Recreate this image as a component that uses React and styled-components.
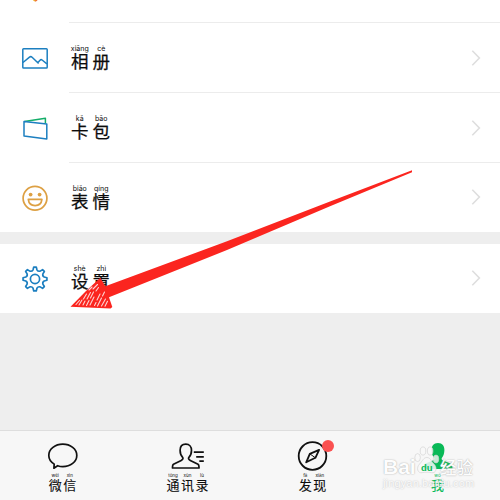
import React from 'react';
import styled, { createGlobalStyle } from 'styled-components';

const GlobalStyle = createGlobalStyle`
  body {
    margin: 0;
    background: #ededed;
    font-family: 'Noto Sans CJK SC', sans-serif;
  }
`;

const Screen = styled.div`
  position: relative;
  display: flex;
  flex-direction: column;
  width: 500px;
  height: 500px;
  overflow: hidden;
  background: #eeeeee;
`;

const Group = styled.div`
  display: flex;
  flex-direction: column;
  background: #ffffff;
  margin-bottom: ${(props) => props.$gap || 0}px;
`;

const Row = styled.div`
  display: flex;
  height: ${(props) => props.$height || 70}px;
`;

const IconCell = styled.div`
  display: flex;
  align-items: center;
  justify-content: center;
  width: 69px;
  height: 70px;
  padding-left: 1px;
  box-sizing: border-box;
  margin-top: ${(props) => props.$shift || 0}px;
`;

const RowBody = styled.div`
  display: flex;
  flex: 1;
  align-items: center;
  justify-content: space-between;
  box-sizing: border-box;
  padding: 0 18px 0 2px;
  border-bottom: 1px solid ${(props) => (props.$last ? 'transparent' : '#ececec')};
`;

const Label = styled.div`
  display: flex;
  gap: ${(props) => (props.$small ? 1.5 : 4)}px;
  color: ${(props) => props.color || '#0c0c0c'};
`;

const Syllable = styled.div`
  display: flex;
  flex-direction: column;
  align-items: center;
  width: ${(props) => (props.$small ? 13 : 17.5)}px;
`;

const Pinyin = styled.span`
  font-family: Inter, 'Noto Sans', sans-serif;
  font-size: ${(props) => (props.$small ? 4.5 : 7)}px;
  line-height: ${(props) => (props.$small ? 4 : 7)}px;
  font-weight: 400;
  white-space: nowrap;
`;

const Hanzi = styled.span`
  font-size: ${(props) => (props.$small ? 13 : 17.5)}px;
  line-height: ${(props) => (props.$small ? 14 : 18)}px;
  font-weight: 400;
  -webkit-text-stroke: ${(props) => (props.$small ? 0.1 : 0.25)}px currentColor;
`;

const TabBar = styled.div`
  display: grid;
  grid-template-columns: repeat(4, 1fr);
  height: 70px;
  box-sizing: border-box;
  margin-top: auto;
  background: #f7f7f7;
  border-top: 1px solid #dedede;
`;

const Tab = styled.div`
  display: flex;
  flex-direction: column;
  align-items: center;
  padding-top: 8px;
`;

const TabIcon = styled.div`
  position: relative;
  width: 34px;
  height: 34px;
  margin-bottom: 1px;
`;

const Badge = styled.span`
  position: absolute;
  top: 1px;
  right: -4px;
  width: 12px;
  height: 12px;
  border-radius: 50%;
  background: #fa5151;
`;

const ArrowLayer = styled.svg`
  position: absolute;
  top: 0;
  left: 0;
`;

const Watermark = styled.div`
  position: absolute;
  left: 383px;
  top: 445px;
  width: 90px;
  height: 45px;
  color: #fdfdfd;
`;

const WatermarkName = styled.div`
  display: flex;
  align-items: center;
  height: 32px;
  padding-top: 12px;
  box-sizing: border-box;
  font-family: 'Liberation Sans', sans-serif;
  font-size: 21px;
  line-height: 20px;
  font-weight: 700;
  text-shadow: 0 0 1.5px #999999;
`;

const WatermarkCjk = styled.span`
  font-family: 'Noto Sans CJK SC', sans-serif;
  font-size: 16.5px;
  font-weight: 500;
  margin-left: auto;
`;

const WatermarkUrl = styled.div`
  font-family: 'Liberation Sans', sans-serif;
  font-size: 11px;
  line-height: 12px;
  letter-spacing: 0.15px;
  white-space: nowrap;
  opacity: 0.85;
  text-shadow: 0 0 1.5px #aaaaaa;
`;

const Paw = styled.svg`
  position: absolute;
  left: 31px;
  top: 0;
`;

const PawText = styled.text`
  font-family: 'Liberation Sans', sans-serif;
  font-size: 9.5px;
  font-weight: 700;
  fill: #09b957;
  stroke: none;
`;

const BLUE = '#1c7fc0';

const Wallet = () => (
  <svg width="28" height="28" viewBox="0 0 28 28">
    <path d="M4 12 L24 12 L16.5 24.5 Q14 28.4 11.5 24.5Z" fill="#eeb02f" />
    <path d="M14.3 26.2l2.4-2" stroke="#ef6b3b" strokeWidth="1.2" />
  </svg>
);

const Album = () => (
  <svg width="28" height="28" viewBox="0 0 28 28" fill="none" stroke={BLUE} strokeWidth="1.5">
    <rect x="1.8" y="4.8" width="24.4" height="19.2" rx="0.8" />
    <path d="M2 18.5L8.5 13.2q1.3-1.1 2.6 0l6.5 6.3M17 18.5l2-2.3q1-1 2.1-.2l4.8 3.8" strokeLinejoin="round" />
  </svg>
);

const Cards = () => (
  <svg width="28" height="28" viewBox="0 0 28 28" fill="none" strokeWidth="1.5" strokeLinejoin="round">
    <path d="M3.4 7.4L24.4 4.3V9.3" stroke="#13ad68" />
    <path d="M3 7.4L25.8 10V25L3 22.1Z" stroke={BLUE} />
  </svg>
);

const Smile = () => (
  <svg width="28" height="28" viewBox="0 0 28 28" fill="none" stroke="#dda043" strokeWidth="1.7">
    <circle cx="14" cy="14.2" r="11.9" />
    <circle cx="9.6" cy="10.6" r="1.9" fill="#dda043" stroke="none" />
    <circle cx="18.6" cy="10.6" r="1.9" fill="#dda043" stroke="none" />
    <path d="M7.3 15.4H20.9Q20.2 21.6 14.1 21.6T7.3 15.4Z" strokeLinejoin="round" />
  </svg>
);

const gearPath = () => {
  const point = (r, deg) => {
    const a = (deg * Math.PI) / 180;
    return `${(14 + r * Math.sin(a)).toFixed(2)} ${(14 - r * Math.cos(a)).toFixed(2)}`;
  };
  let d = '';
  for (let i = 0; i < 8; i++) {
    const a = i * 45;
    d += `${i === 0 ? 'M' : 'L'}${point(12, a - 6)} L${point(12, a + 6)} L${point(9.4, a + 12)} Q${point(7.9, a + 22.5)} ${point(9.4, a + 33)} `;
  }
  return d + 'Z';
};

const Gear = () => (
  <svg width="28" height="28" viewBox="0 0 28 28" fill="none" stroke={BLUE} strokeWidth="1.7" strokeLinejoin="round">
    <path d={gearPath()} />
    <circle cx="14" cy="14" r="4.6" />
  </svg>
);

const Chevron = () => (
  <svg width="12" height="18" viewBox="0 0 12 18" fill="none" stroke="#dedede" strokeWidth="1.6">
    <path d="M2.3 1.8L9.4 9L2.3 16.2" />
  </svg>
);

const ChatIcon = () => (
  <svg width="34" height="34" viewBox="0 0 34 34" fill="none" stroke="#111" strokeWidth="1.7" strokeLinejoin="round">
    <path d="M8.2 25.1C4.9 22.9 2.8 20 2.8 16.4C2.8 10 9.2 5.2 16.8 5.2S30.8 10 30.8 16.4S24.5 27.6 16.8 27.6C14.8 27.6 13.3 27.3 11.6 26.7L7.9 29.2Z" />
  </svg>
);

const ContactsIcon = () => (
  <svg width="34" height="34" viewBox="0 0 34 34" fill="none" stroke="#111" strokeWidth="1.7" strokeLinejoin="round">
    <path d="M14.8 5.2C10.9 5.2 9.1 8 9.1 11.3C9.1 14.2 10.1 16.8 11.6 18.3C12.5 19.3 11.8 20.7 10.2 21.5L2.5 25.3Q1.5 26 1.5 28.1V29H28V28.1Q28 26 27 25.3L19.3 21.5C17.7 20.7 17 19.3 17.9 18.3C19.5 16.8 20.5 14.2 20.5 11.3C20.5 8 18.6 5.2 14.8 5.2Z" />
    <path d="M22.8 13.2H32.8M25.2 17.8H32.8M28.3 22.2H32.8" />
  </svg>
);

const CompassIcon = () => (
  <svg width="34" height="34" viewBox="0 0 34 34" fill="none" stroke="#111" strokeWidth="1.8" strokeLinejoin="round">
    <circle cx="16.5" cy="17" r="13.8" />
    <path d="M23.1 10.8L13.8 14.8L10.2 23.3L19.4 18.8Z" />
    <path d="M13.8 14.8L19.4 18.8" strokeWidth="1" />
  </svg>
);

const MeIcon = () => (
  <svg width="34" height="34" viewBox="0 0 34 34" fill="#09b957">
    <path d="M17 4C12.5 4 10.6 7 10.6 11C10.6 14.3 11.6 17 13 18.7C13.8 19.7 13.4 20.8 11.8 21.6L4.5 24.5Q2.5 25.3 2.5 28V30H31.5V28Q31.5 25.3 29.5 24.5L22.2 21.6C20.6 20.8 20.2 19.7 21 18.7C22.4 17 23.4 14.3 23.4 11C23.4 7 21.5 4 17 4Z" />
  </svg>
);

const rows = [
  { icon: <Album />, text: [['xiāng', '相'], ['cè', '册']] },
  { icon: <Cards />, text: [['kǎ', '卡'], ['bāo', '包']] },
  { icon: <Smile />, text: [['biǎo', '表'], ['qíng', '情']], height: 69, last: true },
];

const tabs = [
  { icon: <ChatIcon />, text: [['wēi', '微'], ['xìn', '信']] },
  { icon: <ContactsIcon />, text: [['tōng', '通'], ['xùn', '讯'], ['lù', '录']] },
  { icon: <CompassIcon />, text: [['fā', '发'], ['xiàn', '现']], badge: true },
  { icon: <MeIcon />, text: [['wǒ', '我']], color: '#09b957' },
];

const RubyLabel = ({ text, small, color }) => (
  <Label $small={small} color={color}>
    {text.map(([pinyin, hanzi]) => (
      <Syllable key={hanzi} $small={small}>
        <Pinyin $small={small}>{pinyin}</Pinyin>
        <Hanzi $small={small}>{hanzi}</Hanzi>
      </Syllable>
    ))}
  </Label>
);

const SettingRow = ({ icon, text, height, last }) => (
  <Row $height={height}>
    <IconCell>{icon}</IconCell>
    <RowBody $last={last}>
      <RubyLabel text={text} />
      <Chevron />
    </RowBody>
  </Row>
);

// red pointer with a hatched head
const Arrow = () => (
  <ArrowLayer width="500" height="320" viewBox="0 0 500 320">
    <path
      d="M412 170.3L412 172.2L330 206.3L227 250L109 297.3L112.3 307L110.5 308.4L70.5 306.7L86 291L100.3 277.8L105.3 286.3L227 241.2L330 201.4Z"
      fill="#fb251f"
    />
    <g stroke="#fff" strokeWidth="1.1" strokeLinecap="round" opacity="0.8">
      <path d="M76 304.5l3.5-4M79 305l3-5M83.5 299l3-5M83 305l2-4M87 299l3.5-6.5M86.5 305.5l2.5-5M90.5 298l3-6M90 305l4-8M94.5 305.5l1.5-3M97 300l3-6M97.5 306l4-8M93 289l4.5-4.5M101.5 306l4-7M102.5 296l2-4M105 306.3l2.5-5M96 291l2.5-3.5M89 290l3-3" />
    </g>
  </ArrowLayer>
);

const App = () => {
  return (
    <>
      <GlobalStyle />
      <Screen>
        <Group $gap={11.5}>
          <Row $height={23}>
            <IconCell $shift={-46}>
              <Wallet />
            </IconCell>
            <RowBody />
          </Row>
          {rows.map((row, i) => (
            <SettingRow key={i} {...row} />
          ))}
        </Group>
        <Group>
          <SettingRow icon={<Gear />} text={[['shè', '设'], ['zhì', '置']]} height={69.5} last />
        </Group>
        <TabBar>
          {tabs.map((tab, i) => (
            <Tab key={i}>
              <TabIcon>
                {tab.icon}
                {tab.badge && <Badge />}
              </TabIcon>
              <RubyLabel text={tab.text} color={tab.color} small />
            </Tab>
          ))}
        </TabBar>
        <Arrow />
        <Watermark>
          <WatermarkName>
            Bai
            <WatermarkCjk>经验</WatermarkCjk>
          </WatermarkName>
          <WatermarkUrl>jingyan.baidu.com</WatermarkUrl>
          <Paw width="28" height="32" viewBox="0 0 28 32" fill="#f8f8f8" stroke="#cfcfcf" strokeWidth="0.6">
            <ellipse cx="3.6" cy="12.6" rx="2.8" ry="4" />
            <ellipse cx="9" cy="6" rx="2.8" ry="4.1" />
            <ellipse cx="16.2" cy="6" rx="2.8" ry="4.1" fillOpacity="0.85" />
            <ellipse cx="22" cy="14" rx="2.8" ry="4" fillOpacity="0.8" />
            <path
              d="M12.8 12.5C9.5 12.5 8.5 16 5.8 18.8C1.5 23 4 28.5 8 27.7C12 27 14 27 17.5 27.7C22 28.5 24 23 19.8 18.8C17 16 16.5 12.5 12.8 12.5Z"
              fillOpacity="0.85"
            />
            <PawText x="7" y="25.5">du</PawText>
          </Paw>
        </Watermark>
      </Screen>
    </>
  );
};

export default App;
